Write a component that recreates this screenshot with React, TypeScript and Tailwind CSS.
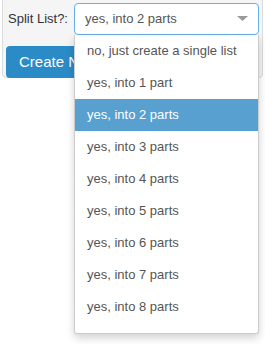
import React from "react";

const items = [
  "no, just create a single list",
  "yes, into 1 part",
  "yes, into 2 parts",
  "yes, into 3 parts",
  "yes, into 4 parts",
  "yes, into 5 parts",
  "yes, into 6 parts",
  "yes, into 7 parts",
  "yes, into 8 parts",
  "yes, into 9 parts",
];

export default function App() {
  return (
    <div
      className="relative w-[265px] h-[344px] overflow-hidden bg-white text-[13px]"
      style={{ fontFamily: '"Liberation Sans", Arial, sans-serif' }}
    >
      <div className="ml-[2px] mt-[-6px] w-[261px] h-[84px] rounded-[4px] border border-[#dcdcdc] bg-[#f5f5f5] pl-[3px] pt-[8px]">
        <div className="flex items-center">
          <span className="ml-[2px] w-[66px] text-[#333]">Split List?:</span>
          <div className="flex h-[32px] w-[185px] items-center justify-between rounded-[4px] border border-[#66afe9] bg-white pl-[10px] pr-[10px] text-[#555]">
            <span>yes, into 2 parts</span>
            <svg width="11" height="6" viewBox="0 0 11 6" className="mt-[-1px]">
              <path d="M0 0 L11 0 L5.5 5 Z" fill="#999" />
            </svg>
          </div>
        </div>
        <div className="mt-[11px] flex h-[32px] w-[120px] items-center rounded-[4px] bg-[#2b8bc7] pl-[13px] text-[15px] text-white">
          Create New List
        </div>
      </div>

      <div className="absolute left-[74px] top-[35px] w-[185px] h-[299px] overflow-hidden rounded-b-[3px] border border-[#ccc] border-t-0 bg-white shadow-[0_4px_8px_rgba(0,0,0,0.18)]">
        {items.map((t, i) => (
          <div
            key={t}
            className={
              i === 2
                ? "flex h-[32px] items-center bg-[#58a0d0] pl-[12px] text-white"
                : "flex h-[32px] items-center pl-[12px] text-[#555]"
            }
          >
            {t}
          </div>
        ))}
      </div>
    </div>
  );
}
